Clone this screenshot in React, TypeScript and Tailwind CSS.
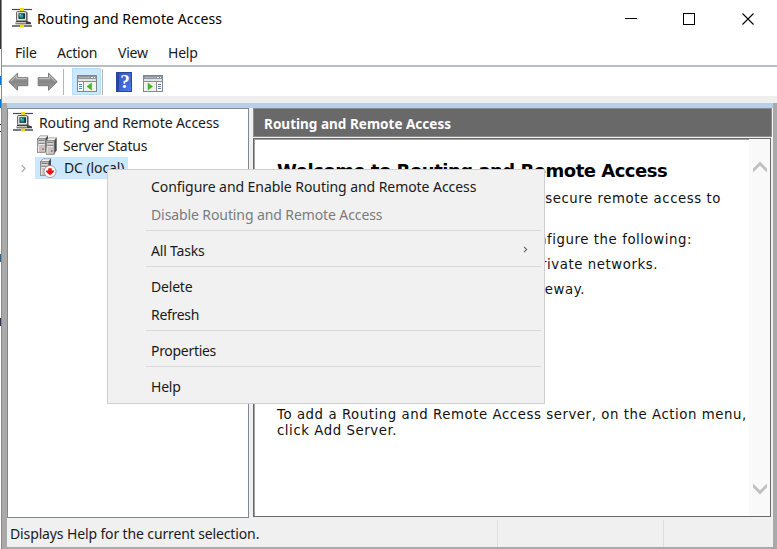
import type { ReactNode } from 'react';

function NetIcon() {
  return (
    <svg width="20" height="20" viewBox="0 0 20 20" className="block shrink-0">
      <path d="M0 1.500h20" stroke="#4a4a4a" strokeWidth="1.2" />
      <path d="M0 18h20" stroke="#333" strokeWidth="1.3" />
      <rect x="8" y="0" width="4" height="3" fill="#e8dc10" />
      <rect x="8" y="16.500" width="4" height="3" fill="#e8dc10" />
      <path d="M14 3.500l1.500 1v8.500h-3z" fill="#4a4a4a" />
      <rect x="4.500" y="3.500" width="10" height="9.500" rx="1.200" fill="#dededb" stroke="#555" strokeWidth=".9" />
      <rect x="6.500" y="5.300" width="6.500" height="5.500" fill="#0d3438" />
      <rect x="7.500" y="6.300" width="3.800" height="3.300" fill="#1fa7a5" />
      <rect x="7.500" y="6.300" width="1.500" height="1" fill="#a5ffff" />
      <path d="M4 13h11l4 1.500v1.700H3.500z" fill="#3f3f3f" />
      <path d="M4 14h10v1.500H4z" fill="#c9c9c6" />
    </svg>
  );
}

function Tower({ x, y }: { x: number; y: number }) {
  return (
    <g transform={`translate(${x} ${y})`}>
      <path d="M0 3 2.500 0h8L8 3z" fill="#f0f0f0" stroke="#777" strokeWidth=".6" />
      <path d="M7.800 3 10.500 0v12.500l-2.700 4z" fill="#4b4b4b" />
      <rect x="0" y="3" width="8" height="13.500" fill="#c8c6c4" stroke="#6f6f6f" strokeWidth=".7" />
      <path d="M1.200 5h5.800M1.200 7.500h5.800" stroke="#555" strokeWidth=".9" />
      <path d="M1.200 6h5.800M1.200 8.500h5.800" stroke="#fff" strokeWidth=".8" />
      <path d="M1 9.500v6.500" stroke="#e9e9e9" />
      <rect x="4.800" y="12.500" width="1.500" height="1.500" fill="#e33" />
    </g>
  );
}

function ServersIcon() {
  return (
    <svg width="20" height="20" viewBox="0 0 20 20" className="mb-[2px] block shrink-0">
      <Tower x={0.5} y={0.8} />
      <Tower x={9.2} y={2.8} />
    </svg>
  );
}

function ServerDownIcon() {
  return (
    <svg width="20" height="20" viewBox="0 0 20 20" className="block shrink-0">
      <Tower x={2.5} y={0.8} />
      <circle cx="12" cy="13.500" r="6" fill="#fff" stroke="#9b8080" strokeWidth=".8" />
      <path d="M10.300 10.200h3.400v2.300h2.200v1.500L12 17.300 8.100 14v-1.500h2.200z" fill="#ed1111" />
    </svg>
  );
}

function ArrowIcon({ right }: { right?: boolean }) {
  return (
    <svg width="21" height="20" viewBox="0 0 21 20" className={right ? 'block -scale-x-100' : 'block'}>
      <defs>
        <linearGradient id="arrowFill" x1="0" y1="0" x2="0" y2="1">
          <stop offset="0" stopColor="#b0b0b0" />
          <stop offset=".5" stopColor="#858585" />
          <stop offset="1" stopColor="#a5a5a5" />
        </linearGradient>
      </defs>
      <path d="M.8 9.700 9.500 1.200v4.500h10.300v8H9.500v4.500z" fill="url(#arrowFill)" stroke="#777" strokeLinejoin="round" />
      <path d="M2.500 9.700 8.700 3.600v3h10" fill="none" stroke="#c4c4c4" />
    </svg>
  );
}

function ConsoleIcon({ mirrored }: { mirrored?: boolean }) {
  return (
    <svg width="20" height="17" viewBox="0 0 20 17" className="block" shapeRendering="crispEdges">
      <rect x=".5" y=".5" width="19" height="16" fill="#fff" stroke="#7f8791" />
      <rect x="1" y="1" width="18" height="3" fill="#8d969f" />
      <path d="M2 2.500h11" stroke="#aeb6bd" />
      <path d="M14 2.500h2M17 2.500h1" stroke="#fff" />
      <rect x="1" y="4" width="18" height="2" fill="#e1e3e5" />
      <path d="M1 6.500h18" stroke="#858e98" />
      {mirrored ? (
        <>
          <path d="M13.500 7v9" stroke="#858e98" />
          <path d="M15 9.500h3M15 11.500h3M15 13.500h3" stroke="#5686b5" />
          <rect x="1" y="7" width="12" height="9" fill="#f2f2ee" />
          <path d="M5 8v7l4.500-3.500z" fill="#44b52d" stroke="#44b52d" strokeWidth=".6" shapeRendering="auto" />
        </>
      ) : (
        <>
          <path d="M6.500 7v9" stroke="#858e98" />
          <path d="M2 9.500h3M2 11.500h3M2 13.500h3" stroke="#5686b5" />
          <rect x="7" y="7" width="12" height="9" fill="#f2f2ee" />
          <path d="M14.500 8v7L10 11.500z" fill="#44b52d" stroke="#44b52d" strokeWidth=".6" shapeRendering="auto" />
        </>
      )}
    </svg>
  );
}

function Chevron({ down }: { down?: boolean }) {
  return (
    <svg width="14" height="12" viewBox="0 0 14 12" className={down ? 'block rotate-180' : 'block'}>
      <path d="M0 7.500 7 .5l7 7v4L7 4.700 0 11.500z" fill="#c1c1c1" />
    </svg>
  );
}

function MenuItem({ children, muted, sub, tracking }: { children: ReactNode; muted?: boolean; sub?: boolean; tracking: string }) {
  return (
    <div className={`flex h-7 items-center justify-between pr-[16px] pl-[43px] whitespace-nowrap ${muted ? 'text-[#7b7b7b]' : 'text-[#1a1a1a]'}`}>
      <span className={tracking}>{children}</span>
      {sub && (
        <svg width="5" height="7" viewBox="0 0 5 7" className="mb-1">
          <path d="M1 .8 3.700 3.500 1 6.200" fill="none" stroke="#666" strokeWidth="1.1" />
        </svg>
      )}
    </div>
  );
}

function Separator() {
  return <div className="mr-[3px] ml-[38px] h-2 pt-[1px]"><div className="h-px bg-[#dadada]" /></div>;
}

function ContextMenu() {
  return (
    <div className="absolute top-[169px] left-[107px] h-[235px] w-[438px] border border-[#cfcfcf] bg-[#f1f1f1] pt-[3px]">
      <MenuItem tracking="tracking-[-0.06px]">Configure and Enable Routing and Remote Access</MenuItem>
      <MenuItem muted tracking="tracking-[-0.1px]">Disable Routing and Remote Access</MenuItem>
      <Separator />
      <MenuItem sub tracking="tracking-[-0.2px]">All Tasks</MenuItem>
      <Separator />
      <MenuItem tracking="tracking-[-0.2px]">Delete</MenuItem>
      <MenuItem tracking="tracking-[-0.3px]">Refresh</MenuItem>
      <Separator />
      <MenuItem tracking="tracking-[-0.3px]">Properties</MenuItem>
      <Separator />
      <MenuItem tracking="tracking-[-0.2px]">Help</MenuItem>
    </div>
  );
}

function TitleBar() {
  return (
    <header className="flex h-[37px] shrink-0 items-center pl-[10px]">
      <div className="mb-[2px]"><NetIcon /></div>
      <span className="ml-[5px] tracking-[0.1px] text-black">Routing and Remote Access</span>
      <svg width="132" height="13" viewBox="0 0 132 13" className="mr-[20px] ml-auto block">
        <path d="M0 6.500h12" stroke="#000" />
        <rect x="58.500" y="1.500" width="11" height="11" fill="none" stroke="#000" />
        <path d="M117.500 1.500 128.500 12.500M128.500 1.500 117.500 12.500" stroke="#000" strokeWidth="1.1" />
      </svg>
    </header>
  );
}

function Toolbar() {
  return (
    <div className="flex h-[29px] shrink-0 items-center pl-[6px]">
      <ArrowIcon />
      <div className="ml-[8px]"><ArrowIcon right /></div>
      <div className="ml-[5px] h-[26px] w-px bg-[#b5b5b5]" />
      <div className="ml-[8px] flex h-[27px] w-[29px] justify-center border border-[#b5dcf8] bg-[#cce8ff] pt-[6px]"><ConsoleIcon /></div>
      <div className="ml-px h-[26px] w-px bg-[#b5b5b5]" />
      <div className="ml-[13px] flex h-5 w-4 items-center justify-center border border-l-3 border-[#2846a0] bg-linear-to-br from-[#3258c4] to-[#4a7ae0] font-['Liberation_Serif',serif] text-[19px] leading-none font-bold text-white">?</div>
      <div className="mt-[3px] ml-[11px]"><ConsoleIcon mirrored /></div>
    </div>
  );
}

function Tree() {
  return (
    <nav className="w-[242px] shrink-0 border border-[#828790] bg-white pt-[3px] whitespace-nowrap">
      <div className="flex h-[22px] items-center pl-[5px]">
        <div className="mb-[2px]"><NetIcon /></div>
        <span className="ml-[6px] tracking-[-0.1px]">Routing and Remote Access</span>
      </div>
      <div className="flex h-[23px] items-center pl-[29px]">
        <ServersIcon />
        <span className="ml-[6px] tracking-[-0.2px]">Server Status</span>
      </div>
      <div className="flex h-[22px] items-center pl-[12px]">
        <svg width="7" height="9" viewBox="0 0 7 9" className="mt-px">
          <path d="M1.800 1.200 5 4.500 1.800 7.800" fill="none" stroke="#a6a6a6" strokeWidth="1.200" />
        </svg>
        <div className="ml-[8px] flex h-[22px] w-[93px] items-center bg-[#cce8ff] pl-[3px]">
          <ServerDownIcon />
          <span className="ml-[6px] tracking-[-0.1px]">DC (local)</span>
        </div>
      </div>
    </nav>
  );
}

function Details() {
  return (
    <section className="ml-[4px] flex min-w-0 flex-1 flex-col">
      <h2 className="flex h-[29px] shrink-0 items-center border border-[#8b8b8b] bg-[#696969] pt-[3px] pl-[10px] text-[13.500px] font-bold text-white">
        <span className="tracking-[0.02px]">Routing and Remote Access</span>
      </h2>
      <div className="mt-px mr-px mb-px flex min-h-0 flex-1 border border-[#696969] bg-white shadow-[inset_1px_1px_0_#a0a0a0]">
        <article className="min-w-0 flex-1 pt-[20px] pl-[23px] font-['DejaVu_Sans',sans-serif] text-[13.300px] leading-4 tracking-[0.56px] whitespace-nowrap text-[#111]">
          <h1 className="h-[26px] text-[18px] leading-6 font-bold tracking-[-0.5px] text-black">Welcome to Routing and Remote Access</h1>
          <p className="mt-[6px] w-[444px] text-right">secure remote access to</p>
          <p className="mt-[25px] w-[415px] text-right">configure the following:</p>
          <p className="mt-[9px] w-[381px] text-right">private networks.</p>
          <p className="mt-[9px] w-[308px] text-right">gateway.</p>
          <p className="mt-[109px]">To add a Routing and Remote Access server, on the Action menu,<br />click Add Server.</p>
        </article>
        <div className="flex w-[21px] shrink-0 flex-col items-center justify-between bg-[#f9f9f9] pt-[22px] pb-[21px]">
          <Chevron />
          <Chevron down />
        </div>
      </div>
    </section>
  );
}

function DesktopEdge() {
  return (
    <div className="flex w-[2px] shrink-0 flex-col border-r border-[#8a8a8a]">
      <div className="h-[49px] bg-[#343434]" />
      <div className="mt-[27px] h-[9px] bg-[#0078d7]" />
      <div className="mt-[14px] h-[9px] bg-[#0078d7]" />
      <div className="mt-[16px] h-[8px] border-y border-[#333]" />
      <div className="mt-[122px] h-[8px] bg-[#35668d]" />
      <div className="mt-[56px] h-[8px] bg-[#333357]" />
    </div>
  );
}

export default function App() {
  return (
    <div className="relative flex h-[549px] w-[777px] overflow-hidden bg-white font-['Noto_Sans',sans-serif] text-[14px] leading-5 text-[#1a1a1a]">
      <DesktopEdge />
      <div className="flex min-w-0 flex-1 flex-col">
        <TitleBar />
        <div className="flex h-[28px] shrink-0 items-center pt-[4px] pl-[13px] tracking-[-0.2px]">
          <span className="w-[42px]">File</span>
          <span className="w-[61px]">Action</span>
          <span className="w-[50px]">View</span>
          <span>Help</span>
        </div>
        <div className="h-[2px] shrink-0 bg-[#b9bdc3]" />
        <Toolbar />
        <div className="h-[7px] shrink-0 bg-[#efefef]" />
        <div className="flex min-h-0 flex-1 flex-col border-r-4 border-b-2 border-l-[5px] border-[#a9a9a9]">
          <div className="h-[5px] shrink-0 bg-[#b7cfe9]" />
          <main className="flex h-[410px] shrink-0 bg-[#f0f0f0] pr-px">
            <Tree />
            <Details />
          </main>
          <footer className="flex flex-1 items-stretch bg-[#f0f0f0] pt-[2px]">
            <span className="w-[491px] border-r border-[#dedede] pt-[4px] pl-[3px] tracking-[-0.13px]">Displays Help for the current selection.</span>
            <span className="w-[166px] border-r border-[#dedede]" />
          </footer>
        </div>
      </div>
      <ContextMenu />
    </div>
  );
}
